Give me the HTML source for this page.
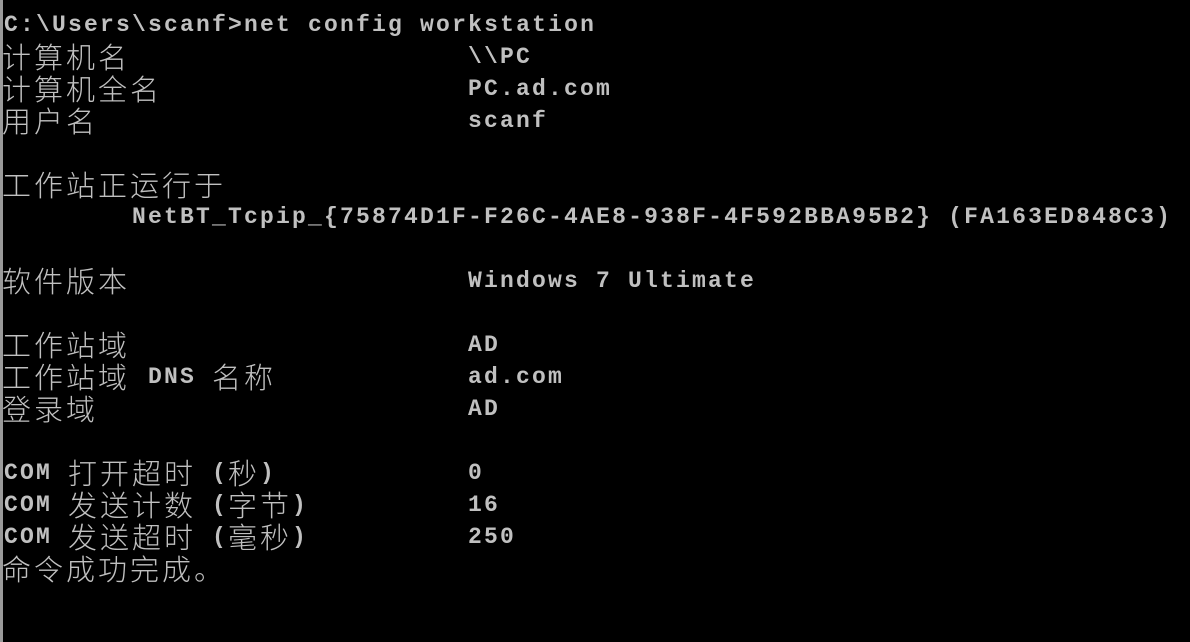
<!DOCTYPE html>
<html><head><meta charset="utf-8"><style>
html,body{margin:0;padding:0;background:#000;width:1190px;height:642px;overflow:hidden}
body{position:relative}
.bar{position:absolute;left:0;top:0;width:3px;height:642px;background:#9a9a9a}
.l,.c{position:absolute;height:32px;line-height:32px;white-space:pre;color:#c0c0c0}
.l{font-family:"Liberation Mono",monospace;font-weight:bold;font-size:23px;letter-spacing:2.2px}
.c{font-family:"Noto Sans CJK SC","WenQuanYi Zen Hei",sans-serif;font-size:29px;letter-spacing:3px;font-weight:300}
</style></head><body>
<div class="bar"></div>
<div class="l" style="top:9px;left:4px">C:\Users\scanf&gt;net config workstation</div>
<div class="c" style="top:40px;left:2px">计算机名</div><div class="l" style="top:41px;left:468px">\\PC</div>
<div class="c" style="top:72px;left:2px">计算机全名</div><div class="l" style="top:73px;left:468px">PC.ad.com</div>
<div class="c" style="top:104px;left:2px">用户名</div><div class="l" style="top:105px;left:468px">scanf</div>
<div class="c" style="top:168px;left:2px">工作站正运行于</div>
<div class="l" style="top:201px;left:132px">NetBT_Tcpip_{75874D1F-F26C-4AE8-938F-4F592BBA95B2} (FA163ED848C3)</div>
<div class="c" style="top:264px;left:2px">软件版本</div><div class="l" style="top:265px;left:468px">Windows 7 Ultimate</div>
<div class="c" style="top:328px;left:2px">工作站域</div><div class="l" style="top:329px;left:468px">AD</div>
<div class="c" style="top:360px;left:2px">工作站域</div><div class="l" style="top:361px;left:148px">DNS</div><div class="c" style="top:360px;left:212px">名称</div><div class="l" style="top:361px;left:468px">ad.com</div>
<div class="c" style="top:392px;left:2px">登录域</div><div class="l" style="top:393px;left:468px">AD</div>
<div class="l" style="top:457px;left:4px">COM</div><div class="c" style="top:456px;left:68px">打开超时</div><div class="l" style="top:457px;left:212px">(</div><div class="c" style="top:456px;left:228px">秒</div><div class="l" style="top:457px;left:260px">)</div><div class="l" style="top:457px;left:468px">0</div>
<div class="l" style="top:489px;left:4px">COM</div><div class="c" style="top:488px;left:68px">发送计数</div><div class="l" style="top:489px;left:212px">(</div><div class="c" style="top:488px;left:228px">字节</div><div class="l" style="top:489px;left:292px">)</div><div class="l" style="top:489px;left:468px">16</div>
<div class="l" style="top:521px;left:4px">COM</div><div class="c" style="top:520px;left:68px">发送超时</div><div class="l" style="top:521px;left:212px">(</div><div class="c" style="top:520px;left:228px">毫秒</div><div class="l" style="top:521px;left:292px">)</div><div class="l" style="top:521px;left:468px">250</div>
<div class="c" style="top:552px;left:2px">命令成功完成。</div>
</body></html>
